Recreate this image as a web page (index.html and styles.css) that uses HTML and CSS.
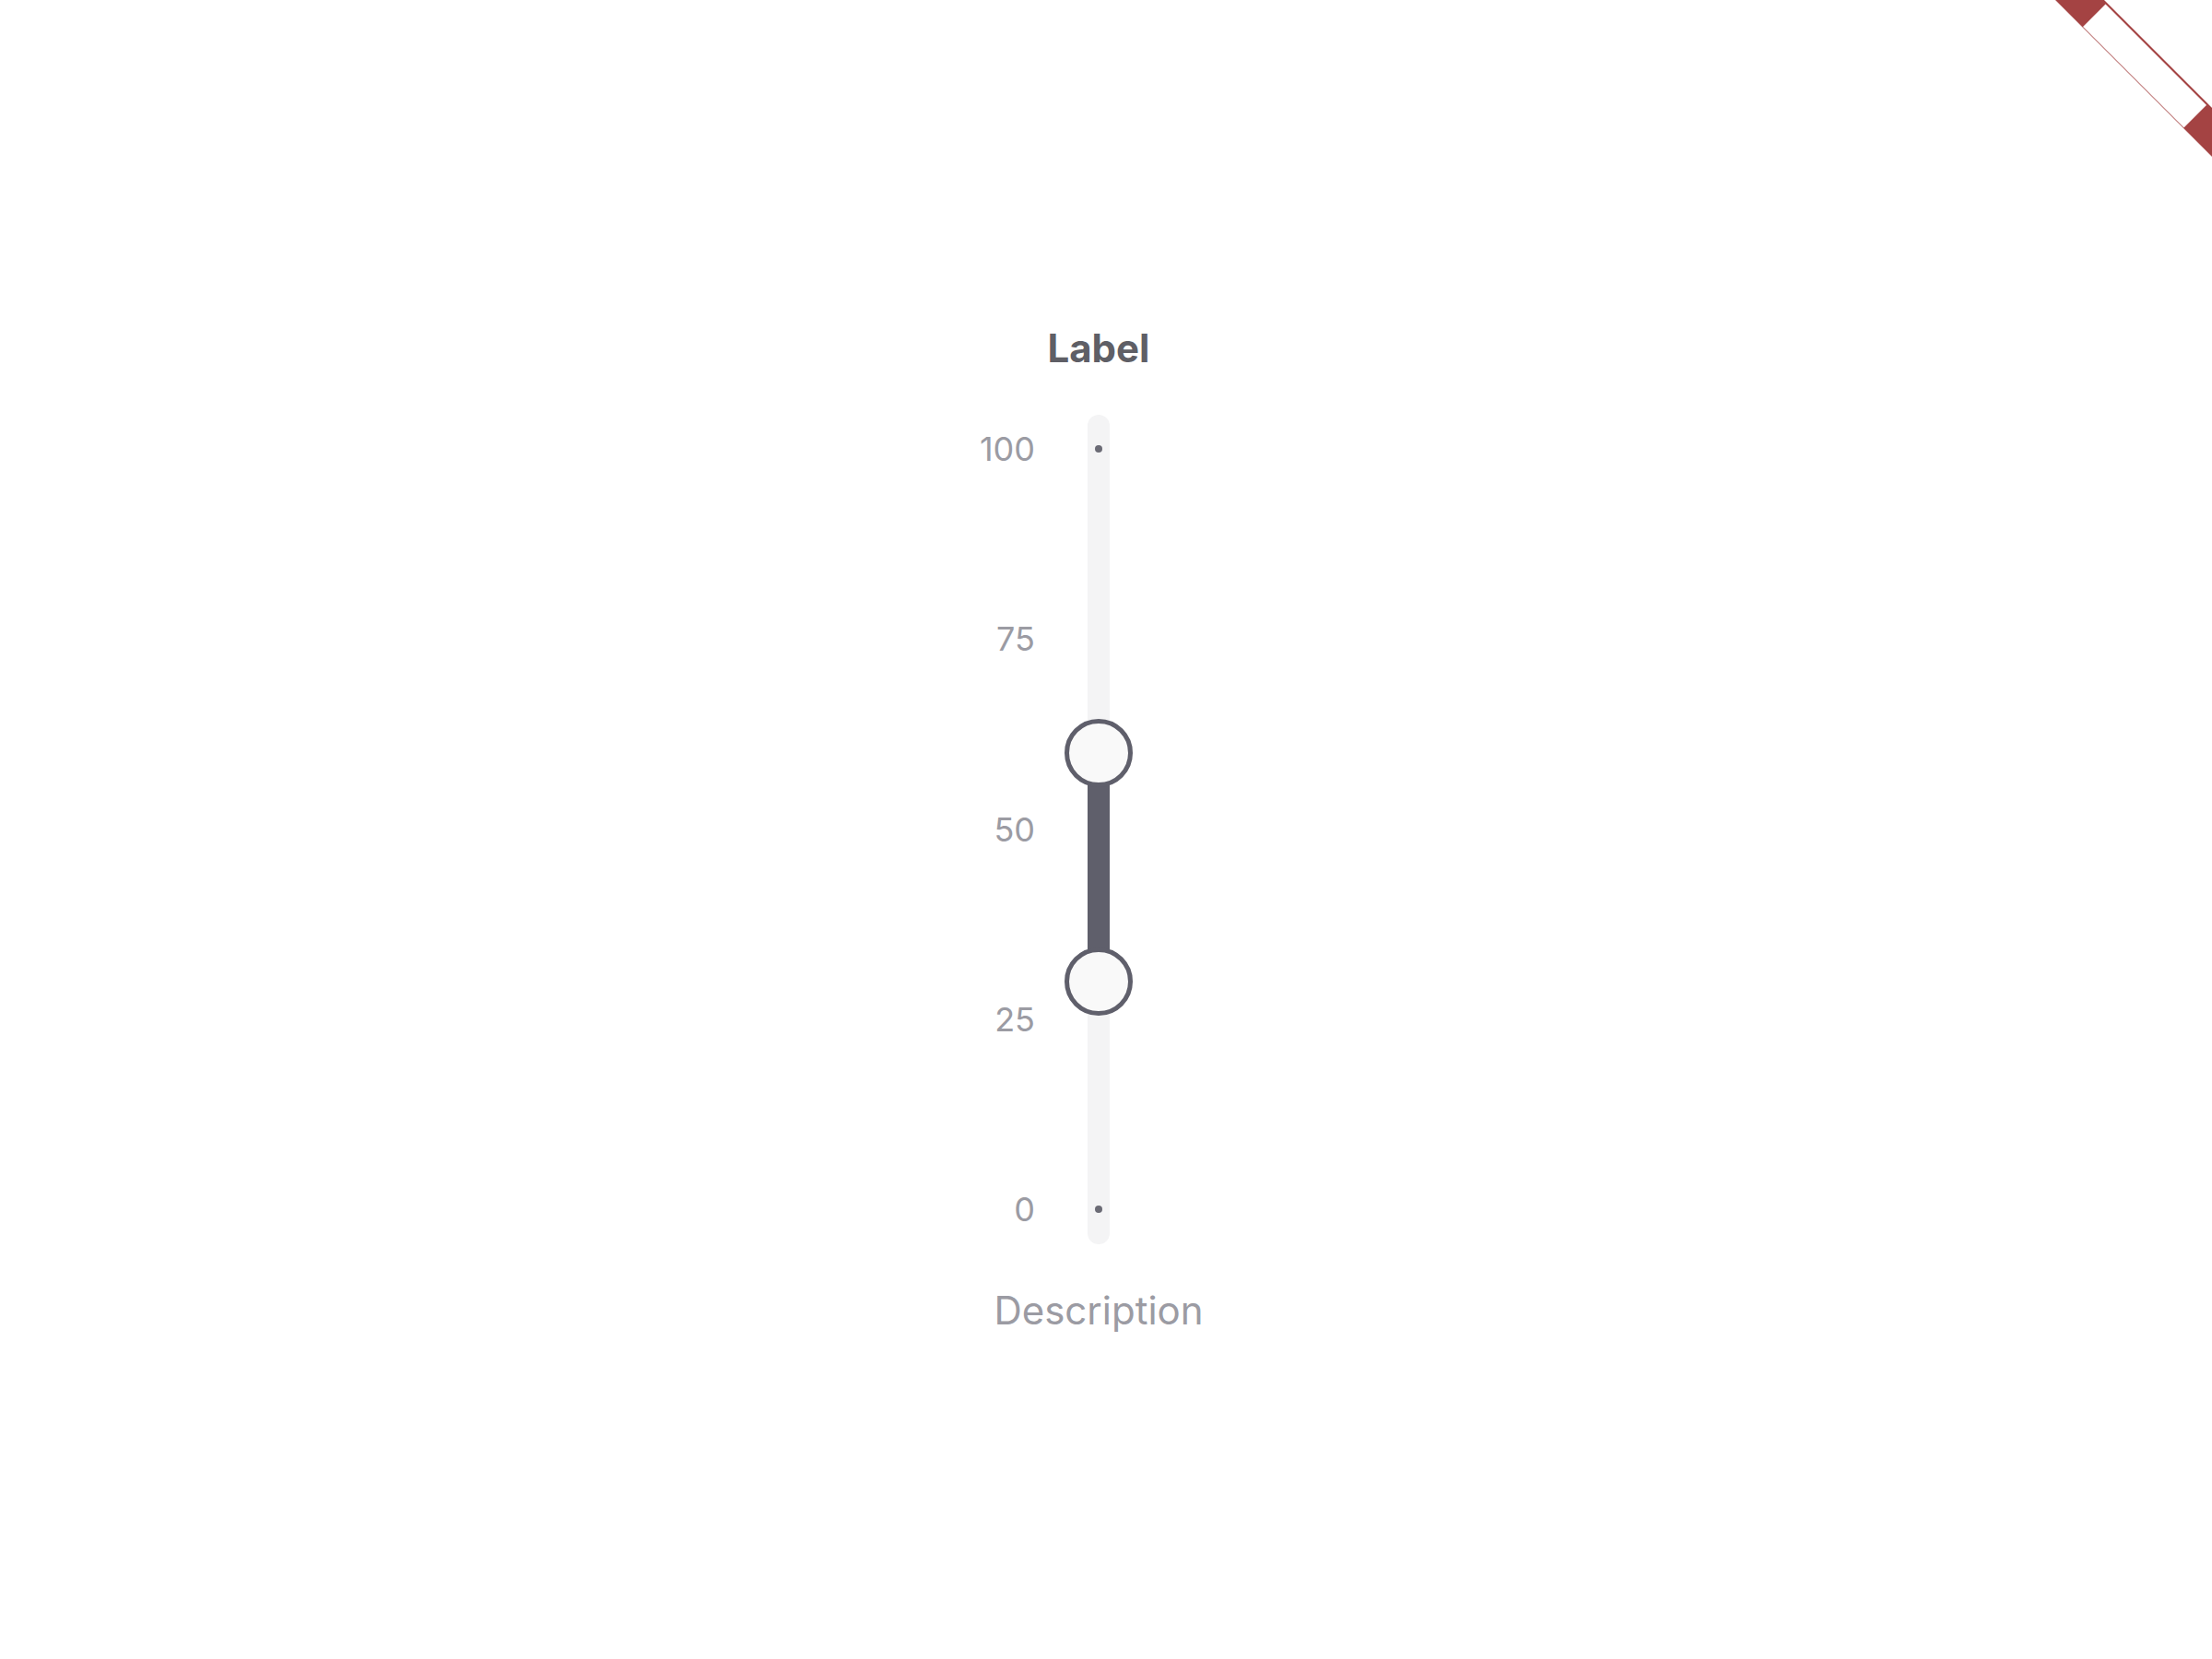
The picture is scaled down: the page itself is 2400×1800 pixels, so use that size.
FILE: index.html
```html
<!DOCTYPE html>
<html lang="en">
<head>
<meta charset="utf-8">
<title>Range slider</title>
<link rel="stylesheet" href="styles.css">
</head>
<body>
<svg class="ribbon" width="170" height="170" viewBox="0 0 170 170" aria-hidden="true">
  <polygon points="0,0 53,0 170,117 170,170" fill="#a44343"/>
  <polygon points="30,29 54.5,4.5 164,114 139.5,138.5" fill="#ffffff"/>
</svg>
<main class="page">
  <div class="field">
    <div class="label">Label</div>
    <div class="track">
      <div class="scale">
        <span class="tick-label" style="--v:100">100</span>
        <span class="tick-label" style="--v:75">75</span>
        <span class="tick-label" style="--v:50">50</span>
        <span class="tick-label" style="--v:25">25</span>
        <span class="tick-label" style="--v:0">0</span>
        <span class="dot" style="--v:100"></span>
        <span class="dot" style="--v:0"></span>
        <span class="fill" style="--from:30;--to:60"></span>
        <span class="thumb" style="--v:60"></span>
        <span class="thumb" style="--v:30"></span>
      </div>
    </div>
    <div class="description">Description</div>
  </div>
</main>
</body>
</html>
```

FILE: styles.css
```css
html, body {
  margin: 0;
  padding: 0;
  background: #ffffff;
}

body {
  font-family: Inter, "Noto Sans", sans-serif;
  position: relative;
  min-height: 1800px;
}

.ribbon {
  position: absolute;
  top: 0;
  right: 0;
  display: block;
}

.page {
  display: flex;
  justify-content: center;
  padding-top: 352px;
  padding-right: 16px;
}

.field {
  display: flex;
  flex-direction: column;
  align-items: center;
  gap: 47px;
}

.label {
  font-size: 42px;
  font-weight: 700;
  line-height: 51px;
  color: #5f5f66;
}

.track {
  position: relative;
  width: 24px;
  height: 900px;
  background: #f4f4f5;
  border-radius: 12px;
}

.scale {
  position: absolute;
  top: 37px;
  bottom: 38px;
  left: 0;
  right: 0;
}

.tick-label {
  position: absolute;
  right: calc(100% + 57px);
  top: calc((100 - var(--v)) * 1%);
  transform: translateY(-50%);
  font-size: 36px;
  line-height: 36px;
  color: #9b9ba3;
  white-space: nowrap;
}

.dot {
  position: absolute;
  left: 50%;
  top: calc((100 - var(--v)) * 1%);
  width: 8px;
  height: 8px;
  border-radius: 50%;
  background: #6b6b75;
  transform: translate(-50%, -50%);
}

.fill {
  position: absolute;
  left: 0;
  right: 0;
  top: calc((100 - var(--to)) * 1%);
  bottom: calc(var(--from) * 1%);
  background: #5f5f6b;
}

.thumb {
  position: absolute;
  left: 50%;
  top: calc((100 - var(--v)) * 1%);
  width: 74px;
  height: 74px;
  box-sizing: border-box;
  border: 5px solid #5f5f6b;
  border-radius: 50%;
  background: #f9f9f9;
  transform: translate(-50%, -50%);
}

.description {
  font-size: 42px;
  line-height: 50px;
  color: #9b9ba3;
}
```
